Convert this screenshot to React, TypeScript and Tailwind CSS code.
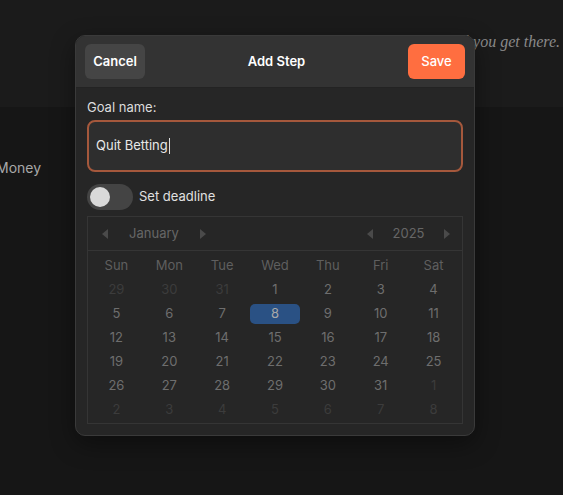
import React from "react";

const weekdays = ["Sun", "Mon", "Tue", "Wed", "Thu", "Fri", "Sat"];

type Day = { n: number; cur: boolean };
const days: Day[] = [
  ...[29, 30, 31].map((n) => ({ n, cur: false })),
  ...Array.from({ length: 31 }, (_, i) => ({ n: i + 1, cur: true })),
  ...[1, 2, 3, 4, 5, 6, 7, 8].map((n) => ({ n, cur: false })),
];

function TriLeft() {
  return (
    <svg width="6" height="10" viewBox="0 0 6 10">
      <path d="M6 0 L0 5 L6 10 Z" fill="#4a4a4a" />
    </svg>
  );
}
function TriRight() {
  return (
    <svg width="6" height="10" viewBox="0 0 6 10">
      <path d="M0 0 L6 5 L0 10 Z" fill="#4a4a4a" />
    </svg>
  );
}

export default function App() {
  return (
    <div
      className="relative w-[563px] h-[495px] overflow-hidden bg-[#161616]"
      style={{ fontFamily: "Inter, 'Noto Sans', sans-serif" }}
    >
      <div className="h-[107px] bg-[#1b1b1b] flex justify-end pr-[3px] pt-[32px]">
        <span
          className="italic text-[16px] text-[#8a8a8a] leading-[20px]"
          style={{ fontFamily: "'Liberation Serif', 'DejaVu Serif', serif" }}
        >
          Keep going until you get there.
        </span>
      </div>
      <div className="pt-[52px] ml-[-4px] text-[14px] text-[#a8a8a8] leading-[18px]">Money</div>

      <div className="absolute z-10 left-[75px] top-[35px] w-[400px] h-[401px] rounded-[10px] border border-[#3a3a3a] bg-[#262626] overflow-hidden shadow-[0_8px_24px_rgba(0,0,0,0.4)]">
        <div className="h-[52px] bg-[#333333] border-b border-[#232323] flex items-center justify-between px-[9px]">
          <button className="h-[35px] w-[60px] rounded-[6px] bg-[#454545] text-white text-[13px] font-semibold">
            Cancel
          </button>
          <span className="text-white text-[13px] font-semibold">Add Step</span>
          <button className="h-[35px] w-[57px] rounded-[6px] bg-[#ff6e40] text-white text-[13px] font-medium">
            Save
          </button>
        </div>

        <div className="px-[11px] pt-[10px]">
          <div className="text-[13px] text-[#dcdcdc] leading-[18px]">Goal name:</div>
          <div className="mt-[4px] h-[52px] rounded-[8px] border-2 border-[#a5583c] bg-[#2e2e2e] flex items-center px-[7px]">
            <span className="text-[13px] text-[#e8e8e8]">Quit Betting</span>
            <span className="w-px h-[16px] bg-[#dddddd] ml-[1px]" />
          </div>

          <div className="mt-[12px] flex items-center gap-[6px]">
            <div className="w-[46px] h-[26px] rounded-full bg-[#444444] flex items-center px-[3px]">
              <div className="w-[20px] h-[20px] rounded-full bg-[#d9d9d9]" />
            </div>
            <span className="text-[13px] text-[#e0e0e0]">Set deadline</span>
          </div>

          <div className="mt-[6px] border border-[#353535] h-[208px]">
            <div className="h-[34px] border-b border-[#353535] flex items-center text-[13px] text-[#666666]">
              <div className="flex items-center">
                <span className="ml-[14px]"><TriLeft /></span>
                <span className="w-[92px] text-center">January</span>
                <TriRight />
              </div>
              <div className="flex-1" />
              <div className="flex items-center">
                <TriLeft />
                <span className="w-[71px] text-center">2025</span>
                <span className="mr-[12px]"><TriRight /></span>
              </div>
            </div>
            <div className="px-[2px] grid grid-cols-7 text-[13px] pt-[3px]">
              {weekdays.map((w) => (
                <div key={w} className="h-[24px] flex items-center justify-center text-[#5f5f5f]">
                  {w}
                </div>
              ))}
              {days.map((d, i) => {
                const sel = d.cur && d.n === 8;
                return (
                  <div key={i} className="h-[24px] flex items-center justify-center">
                    {sel ? (
                      <span className="w-[50px] h-[20px] rounded-[5px] bg-[#2a5184] text-[#a8a8a8] flex items-center justify-center">
                        8
                      </span>
                    ) : (
                      <span className={d.cur ? "text-[#6e6e6e]" : "text-[#3c3c3c]"}>{d.n}</span>
                    )}
                  </div>
                );
              })}
            </div>
          </div>
        </div>
      </div>
    </div>
  );
}
